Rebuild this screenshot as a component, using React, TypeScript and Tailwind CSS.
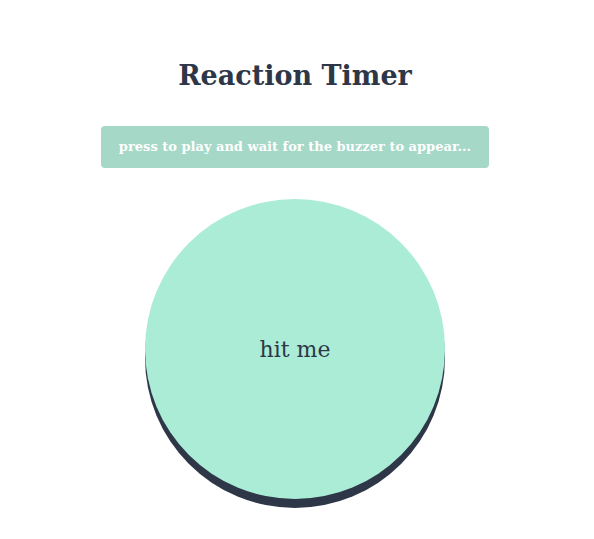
export default function App() {
  return (
    <div className="min-h-screen bg-white flex flex-col items-center pt-[55px] pr-[4px] text-[#2d3748] [font-family:'DejaVu_Serif',serif]">
      <h1 className="text-[27px] font-bold leading-[42px]">Reaction Timer</h1>

      <button
        type="button"
        className="mt-[29px] w-[388px] h-[42px] rounded-[4px] bg-[#a5d8c6] text-white text-[13px] font-bold"
      >
        press to play and wait for the buzzer to appear...
      </button>

      <button
        type="button"
        className="mt-[31px] w-[300px] h-[300px] rounded-full bg-[#abecd6] shadow-[0_9px_0_#2d3748] flex items-center justify-center text-[22px] text-[#2d3748]"
      >
        hit me
      </button>
    </div>
  );
}
